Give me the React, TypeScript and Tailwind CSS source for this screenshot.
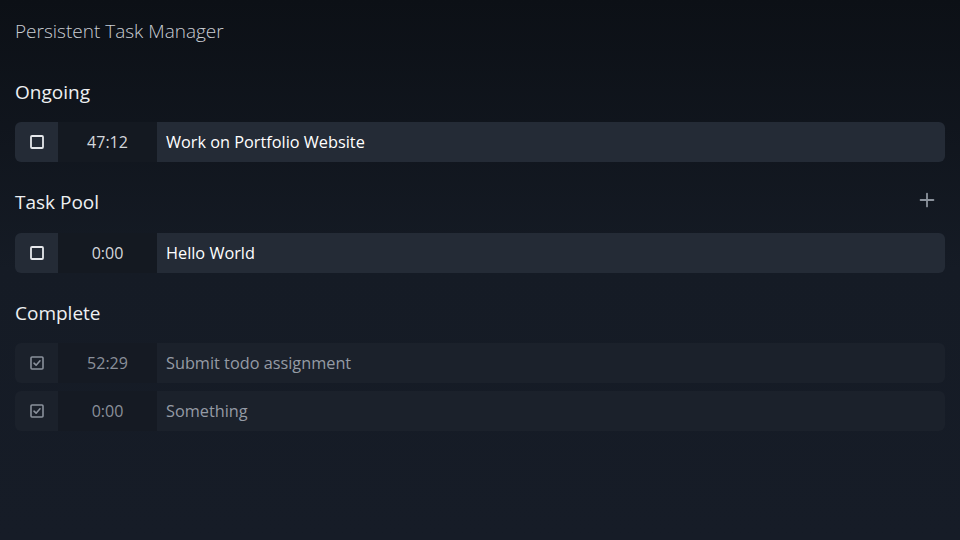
import { Plus } from "lucide-react";

interface Task {
  id: string;
  time: string;
  name: string;
}

const ongoing: Task[] = [{ id: "1", time: "47:12", name: "Work on Portfolio Website" }];
const pool: Task[] = [{ id: "2", time: "0:00", name: "Hello World" }];
const complete: Task[] = [
  { id: "3", time: "52:29", name: "Submit todo assignment" },
  { id: "4", time: "0:00", name: "Something" },
];

function Box({ checked }: { checked?: boolean }) {
  if (checked) {
    return (
      <svg width="14" height="14" viewBox="0 0 14 14" fill="none">
        <rect x="1" y="1" width="12" height="12" rx="1" stroke="#8a919c" strokeWidth="1.6" />
        <path d="M4 7.2 L6.1 9.2 L10 4.8" stroke="#8a919c" strokeWidth="1.6" strokeLinecap="round" strokeLinejoin="round" />
      </svg>
    );
  }
  return (
    <svg width="14" height="14" viewBox="0 0 14 14" fill="none">
      <rect x="1" y="1" width="12" height="12" rx="1" stroke="#e6e8eb" strokeWidth="1.8" />
    </svg>
  );
}

function TaskRow({ task, done }: { task: Task; done?: boolean }) {
  return (
    <div className="flex h-10 rounded-md overflow-hidden">
      <div className={`w-[43px] flex items-center justify-center ${done ? "bg-[#1b212b]" : "bg-[#242b36]"}`}>
        <Box checked={done} />
      </div>
      <div
        className={`w-[99px] flex items-center justify-center text-[16px] ${
          done ? "bg-[#151a23] text-[#8a909a]" : "bg-[#141921] text-[#d4d7dc]"
        }`}
      >
        {task.time}
      </div>
      <div
        className={`flex-1 flex items-center px-[9px] text-[16.3px] ${
          done ? "bg-[#1b212b] text-[#959ba5]" : "bg-[#242b36] text-white"
        }`}
      >
        {task.name}
      </div>
    </div>
  );
}

export default function App() {
  return (
    <div
      className="w-[960px] h-[540px] bg-gradient-to-b from-[#0c1016] via-[#151b25] to-[#161c27] px-[15px] pt-[18px] text-white"
      style={{ fontFamily: '"Open Sans", "Noto Sans", sans-serif' }}
    >
      <h1 className="text-[19px] font-light text-[#c9cdd3] leading-[26px]">Persistent Task Manager</h1>

      {/* Ongoing */}
      <h2 className="mt-[34px] text-[19px] leading-[28px] text-[#eef0f2]">Ongoing</h2>
      <div className="mt-[16px] flex flex-col gap-2">
        {ongoing.map((t) => (
          <TaskRow key={t.id} task={t} />
        ))}
      </div>

      {/* Task Pool */}
      <div className="mt-[26px] flex items-center justify-between h-[28px]">
        <h2 className="text-[19px] leading-[28px] text-[#eef0f2]">Task Pool</h2>
        <Plus size={22} strokeWidth={2} className="text-[#8b929c] mr-[7px] -mt-[5px]" />
      </div>
      <div className="mt-[17px] flex flex-col gap-2">
        {pool.map((t) => (
          <TaskRow key={t.id} task={t} />
        ))}
      </div>

      {/* Complete */}
      <h2 className="mt-[26px] text-[19px] leading-[28px] text-[#eef0f2]">Complete</h2>
      <div className="mt-[16px] flex flex-col gap-2">
        {complete.map((t) => (
          <TaskRow key={t.id} task={t} done />
        ))}
      </div>
    </div>
  );
}
